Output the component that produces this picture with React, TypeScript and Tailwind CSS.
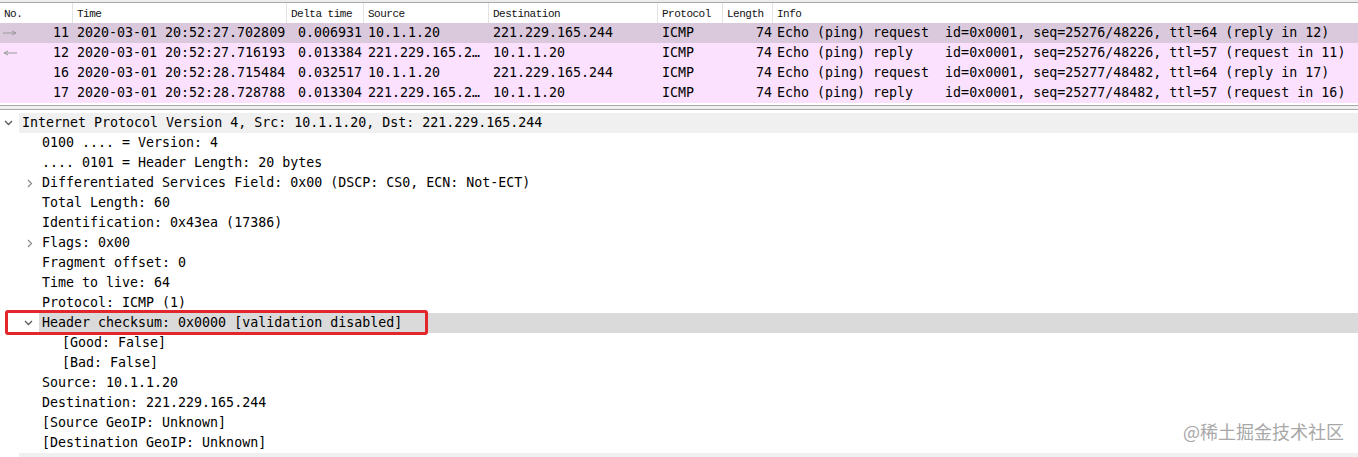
import type { ReactNode } from "react";

interface Packet {
  no: string;
  arrow?: "right" | "left";
  time: string;
  delta: string;
  source: string;
  destination: string;
  protocol: string;
  length: string;
  info: string;
  current?: boolean;
}

interface TreeItem {
  depth: number;
  text: string;
  expander?: "open" | "closed";
  top?: boolean;
  selected?: boolean;
}

const packets: Packet[] = [
  {
    no: "11",
    arrow: "right",
    time: "2020-03-01 20:52:27.702809",
    delta: "0.006931",
    source: "10.1.1.20",
    destination: "221.229.165.244",
    protocol: "ICMP",
    length: "74",
    info: "Echo (ping) request  id=0x0001, seq=25276/48226, ttl=64 (reply in 12)",
    current: true,
  },
  {
    no: "12",
    arrow: "left",
    time: "2020-03-01 20:52:27.716193",
    delta: "0.013384",
    source: "221.229.165.2…",
    destination: "10.1.1.20",
    protocol: "ICMP",
    length: "74",
    info: "Echo (ping) reply    id=0x0001, seq=25276/48226, ttl=57 (request in 11)",
  },
  {
    no: "16",
    time: "2020-03-01 20:52:28.715484",
    delta: "0.032517",
    source: "10.1.1.20",
    destination: "221.229.165.244",
    protocol: "ICMP",
    length: "74",
    info: "Echo (ping) request  id=0x0001, seq=25277/48482, ttl=64 (reply in 17)",
  },
  {
    no: "17",
    time: "2020-03-01 20:52:28.728788",
    delta: "0.013304",
    source: "221.229.165.2…",
    destination: "10.1.1.20",
    protocol: "ICMP",
    length: "74",
    info: "Echo (ping) reply    id=0x0001, seq=25277/48482, ttl=57 (request in 16)",
  },
];

const tree: TreeItem[] = [
  { depth: 0, top: true, expander: "open", text: "Internet Protocol Version 4, Src: 10.1.1.20, Dst: 221.229.165.244" },
  { depth: 1, text: "0100 .... = Version: 4" },
  { depth: 1, text: ".... 0101 = Header Length: 20 bytes" },
  { depth: 1, expander: "closed", text: "Differentiated Services Field: 0x00 (DSCP: CS0, ECN: Not-ECT)" },
  { depth: 1, text: "Total Length: 60" },
  { depth: 1, text: "Identification: 0x43ea (17386)" },
  { depth: 1, expander: "closed", text: "Flags: 0x00" },
  { depth: 1, text: "Fragment offset: 0" },
  { depth: 1, text: "Time to live: 64" },
  { depth: 1, text: "Protocol: ICMP (1)" },
  { depth: 1, expander: "open", selected: true, text: "Header checksum: 0x0000 [validation disabled]" },
  { depth: 2, text: "[Good: False]" },
  { depth: 2, text: "[Bad: False]" },
  { depth: 1, text: "Source: 10.1.1.20" },
  { depth: 1, text: "Destination: 221.229.165.244" },
  { depth: 1, text: "[Source GeoIP: Unknown]" },
  { depth: 1, text: "[Destination GeoIP: Unknown]" },
  // next top-level row, only its top edge shows in the window
  { depth: 0, top: true, text: "" },
];

const indentClass = ["w-[19px]", "w-[39px]", "w-[59px]"];

function Arrow({ dir }: { dir: "right" | "left" }) {
  if (dir === "right") {
    return (
      <svg width="16" height="8" viewBox="0 0 16 8" className="absolute left-[2px] top-[6px]">
        <line x1="1" y1="4" x2="14" y2="4" stroke="#9a9a9a" strokeWidth="1" />
        <path d="M10 2 L14 4 L10 6" fill="none" stroke="#9a9a9a" strokeWidth="1" />
      </svg>
    );
  }
  return (
    <svg width="16" height="8" viewBox="0 0 16 8" className="absolute left-[2px] top-[6px]">
      <line x1="2" y1="4" x2="15" y2="4" stroke="#9a9a9a" strokeWidth="1" />
      <path d="M6 2 L2 4 L6 6" fill="none" stroke="#9a9a9a" strokeWidth="1" />
    </svg>
  );
}

function Chevron({ open }: { open: boolean }) {
  return open ? (
    <svg width="9" height="6" viewBox="0 0 9 6">
      <path d="M1 1 L4.5 4.5 L8 1" fill="none" stroke="#5a5a5a" strokeWidth="1.3" />
    </svg>
  ) : (
    <svg width="6" height="9" viewBox="0 0 6 9">
      <path d="M1 1 L4.5 4.5 L1 8" fill="none" stroke="#8a8a8a" strokeWidth="1.2" />
    </svg>
  );
}

function HeadCell({ className, children }: { className: string; children: ReactNode }) {
  return (
    <div className={`h-full pl-[4px] pt-[2px] leading-[18px] border-r border-[#e3e3e3] ${className}`}>
      {children}
    </div>
  );
}

export default function App() {
  return (
    <div className="relative w-[1358px] h-[457px] overflow-hidden bg-white text-black font-['DejaVu_Sans_Mono',monospace]">
      {/* packet list */}
      <div className="h-[2px] bg-[#ececec]" />
      <div className="border-t border-[#a9a9a9]">
        <div className="flex h-[20px] bg-white text-[11px] tracking-[-0.5px] font-['Liberation_Mono',monospace] text-[#111]">
          <HeadCell className="w-[73px] pl-[3px]">No.</HeadCell>
          <HeadCell className="w-[214px]">Time</HeadCell>
          <HeadCell className="w-[77px]">Delta time</HeadCell>
          <HeadCell className="w-[125px]">Source</HeadCell>
          <HeadCell className="w-[169px]">Destination</HeadCell>
          <HeadCell className="w-[65px]">Protocol</HeadCell>
          <HeadCell className="w-[50px]">Length</HeadCell>
          <div className="flex-1 pl-[4px] pt-[2px] leading-[18px]">Info</div>
        </div>

        {packets.map((p) => (
          <div
            key={p.no}
            className={`flex h-[20px] leading-[20px] text-[13.3px] whitespace-pre ${
              p.current ? "bg-[#dac8dc]" : "bg-[#fbe1fd]"
            }`}
          >
            <div className="relative w-[73px] pr-[4px] text-right">
              {p.arrow && <Arrow dir={p.arrow} />}
              {p.no}
            </div>
            <div className="w-[214px] pl-[4px]">{p.time}</div>
            <div className="w-[77px] pr-[2px] text-right">{p.delta}</div>
            <div className="w-[125px] pl-[4px] overflow-hidden">{p.source}</div>
            <div className="w-[169px] pl-[4px]">{p.destination}</div>
            <div className="w-[65px] pl-[4px]">{p.protocol}</div>
            <div className="w-[50px] pr-[1px] text-right">{p.length}</div>
            <div className="flex-1 pl-[4px]">{p.info}</div>
          </div>
        ))}
        <div className="h-[2px] bg-white" />
      </div>

      {/* splitter */}
      <div className="h-[5px] border-t border-b border-[#a9a9a9] bg-[#f0f0f0]" />
      <div className="h-[3px] bg-white" />

      {/* packet details */}
      <div className="text-[13.3px] leading-[20px] whitespace-pre">
        {tree.map((t, i) => (
          <div key={i} className="flex h-[20px]">
            <div className={`flex items-center justify-end pr-[6px] shrink-0 ${indentClass[t.depth]}`}>
              {t.expander && <Chevron open={t.expander === "open"} />}
            </div>
            <div
              className={`flex-1 pl-[3px] ${
                t.selected ? "bg-[#dadada]" : t.top ? "bg-[#f0f0f0]" : ""
              }`}
            >
              {t.text}
            </div>
          </div>
        ))}
      </div>

      {/* annotation */}
      <div className="absolute left-[5px] top-[310px] w-[423px] h-[25px] border-[3px] border-[#e3262b] rounded-[3px]" />

      {/* watermark */}
      <div className="absolute left-[1183px] top-[419px] text-[18px] leading-[24px] text-[#a8a8a8] font-['Noto_Sans_CJK_SC',sans-serif]">
        @稀土掘金技术社区
      </div>
    </div>
  );
}
